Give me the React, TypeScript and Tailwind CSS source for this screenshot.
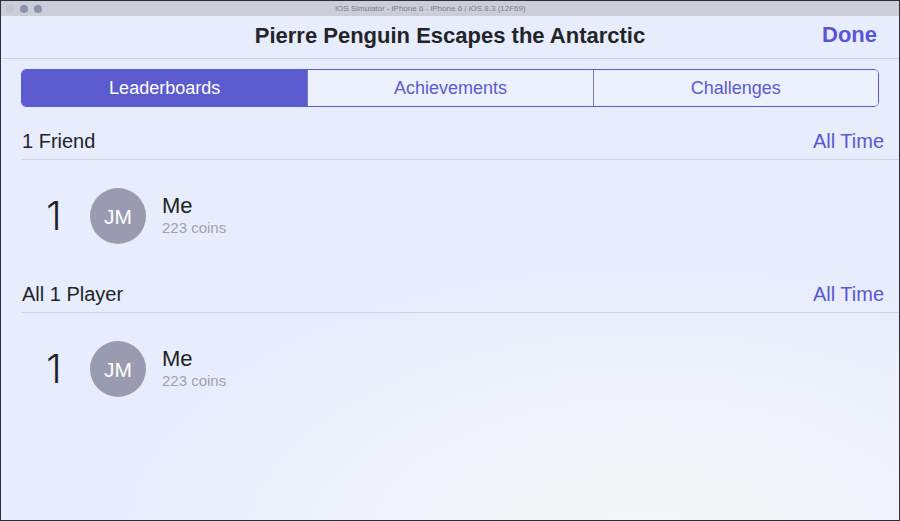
import React from "react";

const font = { fontFamily: '"Liberation Sans", Arial, sans-serif' };

function Row() {
  return (
    <div className="flex items-start pt-[28px] h-[84px] pl-[21px]">
      <div className="w-[64px] h-[56px] flex items-center justify-center shrink-0">
        <span
          style={{ fontFamily: 'Inter, "Liberation Sans", sans-serif' }}
          className="text-[39px] leading-[56px] font-light text-[#1f2024]"
        >
          1
        </span>
      </div>
      <div className="w-[56px] h-[56px] rounded-full bg-[#9a9ab1] flex items-center justify-center ml-[4px] shrink-0">
        <span className="text-white text-[21px] leading-none">JM</span>
      </div>
      <div className="ml-[16px] flex flex-col">
        <span className="text-[22px] leading-[26px] text-[#1e1f23] mt-[5px]">Me</span>
        <span className="text-[15px] leading-[18px] text-[#a0a0b2]">223 coins</span>
      </div>
    </div>
  );
}

function Header({ label, h }: { label: string; h: string }) {
  return (
    <div className={`ml-[21px] ${h} border-b border-[#cfd3e0] flex items-end justify-between pr-[15px] pb-[6px] shrink-0`}>
      <span className="text-[20px] leading-[24px] text-[#222327]">{label}</span>
      <span className="text-[20px] leading-[24px] text-[#5a58cf]">All Time</span>
    </div>
  );
}

export default function App() {
  return (
    <div
      style={font}
      className="w-[900px] h-[521px] border border-[#2c2f37] flex flex-col overflow-hidden bg-[radial-gradient(ellipse_60%_55%_at_72%_105%,#f6f6f8_0%,#f3f5fa_35%,#e7edfd_100%)] bg-[#e7edfd]"
    >
      <div className="h-[15px] bg-[#cbcdd9] flex items-center relative shrink-0">
        <div className="flex items-center gap-[6px] ml-[5px]">
          <div className="w-[8px] h-[8px] rounded-full bg-[#c3c5d2]" />
          <div className="w-[8px] h-[8px] rounded-full bg-[#8e91aa]" />
          <div className="w-[8px] h-[8px] rounded-full bg-[#8e91aa]" />
        </div>
        <div className="flex-1 flex justify-center mr-[80px]">
          <span className="text-[8px] leading-none text-[#7a7c88]">iOS Simulator - iPhone 6 - iPhone 6 / iOS 8.3 (12F69)</span>
        </div>
      </div>
      <div className="h-[43px] border-b border-[#cdd1de] flex items-center justify-center relative shrink-0">
        <span className="text-[22px] leading-[26px] font-bold text-[#232428] mb-[2px]">Pierre Penguin Escapes the Antarctic</span>
        <span className="absolute right-[22px] top-[6px] text-[22px] leading-[26px] font-bold text-[#5856d6]">Done</span>
      </div>
      <div className="mx-[20px] mt-[10px] h-[38px] grid grid-cols-3 border border-[#5b5bd0] rounded-[5px] overflow-hidden shrink-0">
        <div className="bg-[#5b5bd0] flex items-center justify-center text-white text-[18px] pt-[1px]">Leaderboards</div>
        <div className="bg-[#edf1fd] border-l border-[#7a7ab8] flex items-center justify-center text-[#5b5bd0] text-[18px] pt-[1px]">Achievements</div>
        <div className="bg-[#edf1fd] border-l border-[#7a7ab8] flex items-center justify-center text-[#5b5bd0] text-[18px] pt-[1px]">Challenges</div>
      </div>
      <Header label="1 Friend" h="h-[53px]" />
      <Row />
      <Header label="All 1 Player" h="h-[69px]" />
      <Row />
    </div>
  );
}
